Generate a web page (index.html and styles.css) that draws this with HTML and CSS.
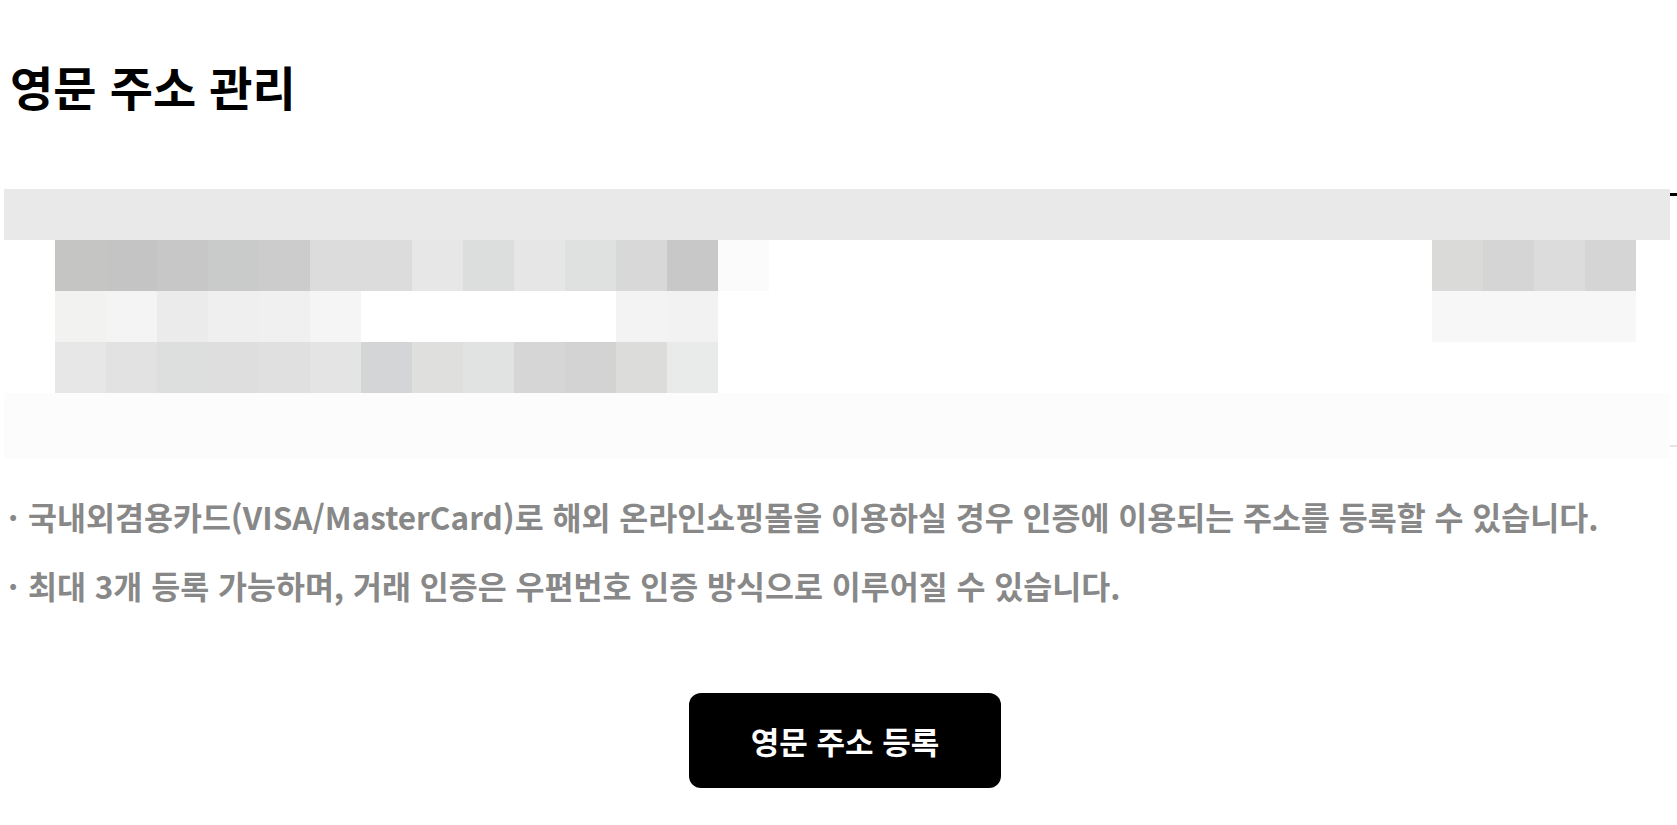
FILE: index.html
```html
<!doctype html>
<html lang="ko">
  <head>
    <meta charset="UTF-8">
    <title>영문 주소 관리</title>
    <link rel="stylesheet" href="styles.css">
  </head>
  <body>
    <div class="page">
      <h1 class="title">영문 주소 관리</h1>

      <div class="addr-table">
        <!-- masked address list -->
        <div class="mosaic">
          <div class="mosaic-head"></div>
          <div class="mosaic-row">
            <i class="first" style="background:#c5c5c3"></i>
            <i style="background:#c4c4c4"></i>
            <i style="background:#c7c7c7"></i>
            <i style="background:#c9cbca"></i>
            <i style="background:#cbcccb"></i>
            <i style="background:#dcdcdc"></i>
            <i style="background:#dcdcdc"></i>
            <i style="background:#e7e7e7"></i>
            <i style="background:#dcdedd"></i>
            <i style="background:#e6e6e6"></i>
            <i style="background:#dfe1e0"></i>
            <i style="background:#d8d8d8"></i>
            <i style="background:#c8c8c8"></i>
            <i style="background:#fafbfa"></i>
            <i class="right" style="background:#dadad8"></i>
            <i style="background:#d5d5d5"></i>
            <i style="background:#dcdcdc"></i>
            <i style="background:#d5d5d5"></i>
          </div>
          <div class="mosaic-row">
            <i class="first" style="background:#f2f2f1"></i>
            <i style="background:#f4f4f4"></i>
            <i style="background:#ebebeb"></i>
            <i style="background:#efefef"></i>
            <i style="background:#f0f0f0"></i>
            <i style="background:#f5f5f5"></i>
            <i></i>
            <i></i>
            <i></i>
            <i></i>
            <i></i>
            <i style="background:#f3f3f3"></i>
            <i style="background:#f2f2f2"></i>
            <i class="right" style="background:#f7f7f7"></i>
            <i style="background:#f7f7f7"></i>
            <i style="background:#f7f7f7"></i>
            <i style="background:#f7f7f7"></i>
          </div>
          <div class="mosaic-row">
            <i class="first" style="background:#e7e7e7"></i>
            <i style="background:#e2e2e2"></i>
            <i style="background:#dddfde"></i>
            <i style="background:#dedede"></i>
            <i style="background:#e0e0e0"></i>
            <i style="background:#e4e4e4"></i>
            <i style="background:#d4d5d7"></i>
            <i style="background:#dfdfdd"></i>
            <i style="background:#e1e3e2"></i>
            <i style="background:#d6d6d6"></i>
            <i style="background:#d3d3d3"></i>
            <i style="background:#dcdcda"></i>
            <i style="background:#e9ebea"></i>
          </div>
          <div class="mosaic-foot"></div>
        </div>
      </div>

      <ul class="notes">
        <li>국내외겸용카드(VISA/MasterCard)로 해외 온라인쇼핑몰을 이용하실 경우 인증에 이용되는 주소를 등록할 수 있습니다.</li>
        <li>최대 3개 등록 가능하며, 거래 인증은 우편번호 인증 방식으로 이루어질 수 있습니다.</li>
      </ul>

      <div class="actions">
        <button type="button" class="btn-add">영문 주소 등록</button>
      </div>
    </div>
  </body>
</html>
```

FILE: styles.css
```css
html{
  overflow-x: hidden;
}
body{
  margin: 0;
  background: #fff;
  color: #000;
  font-family: "Noto Sans CJK KR", "Noto Sans", sans-serif;
}
.page{
  width: 1682px;
  margin-left: 4px;
}
.title{
  margin: 54px 0 0;
  padding-left: 6px;
  font-size: 47px;
  line-height: 64px;
  font-weight: 700;
}
.addr-table{
  position: relative;
  margin-top: 75px;
  height: 249px;
  border-top: 3px solid #000;
  border-bottom: 2px solid #e5e5e5;
}
.mosaic{
  position: absolute;
  left: 0;
  top: -7px;
  width: 1666px;
  background: #fff;
}
.mosaic-head{
  height: 51px;
  background: #e9e9e9;
}
.mosaic-row{
  display: grid;
  grid-template-columns: repeat(32, 51px);
  height: 51px;
}
.mosaic-row i{
  display: block;
}
.mosaic-row .first{
  grid-column-start: 2;
}
.mosaic-row .right{
  grid-column-start: 29;
}
.mosaic-foot{
  height: 65px;
  background: #fcfcfc;
}
.notes{
  list-style: none;
  margin: 47px 0 0;
  padding: 0 0 0 24px;
  color: #888;
  font-size: 31.5px;
  font-weight: 700;
  line-height: 45px;
}
.notes li + li{
  margin-top: 24px;
}
.notes li::before{
  content: "·";
  display: inline-block;
  width: 20px;
  margin-left: -20px;
}
.actions{
  display: flex;
  justify-content: center;
  margin-top: 85px;
}
.btn-add{
  width: 312px;
  height: 95px;
  border: 0;
  border-radius: 12px;
  background: #000;
  color: #fff;
  font-family: inherit;
  font-size: 31px;
  font-weight: 700;
  cursor: pointer;
}
```
